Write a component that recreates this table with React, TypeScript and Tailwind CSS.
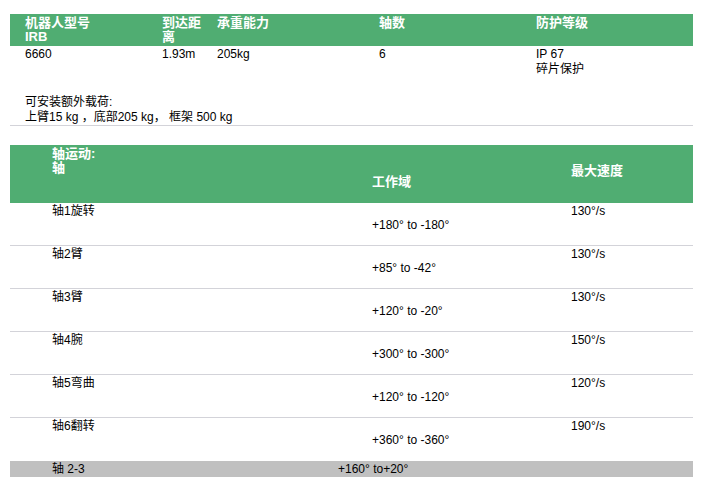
import React from "react";

const font = {
  fontFamily: '"Liberation Sans", Arial, "Noto Sans CJK SC", sans-serif',
};

const axes = [
  { name: "轴1旋转", range: "+180° to -180°", speed: "130°/s" },
  { name: "轴2臂", range: "+85° to -42°", speed: "130°/s" },
  { name: "轴3臂", range: "+120° to -20°", speed: "130°/s" },
  { name: "轴4腕", range: "+300° to -300°", speed: "150°/s" },
  { name: "轴5弯曲", range: "+120° to -120°", speed: "120°/s" },
  { name: "轴6翻转", range: "+360° to -360°", speed: "190°/s" },
];

export default function App() {
  return (
    <div
      className="w-[711px] h-[482px] bg-white text-black text-[12px] leading-[15px] pt-[14px] px-[10px]"
      style={font}
    >
      <div className="w-[683px]">
        {/* Spec table */}
        <div className="grid grid-cols-[152px_55px_162px_157px_157px] h-[32px] bg-[#50ad72] text-white font-bold text-[13px] leading-[14px] pt-[2px]">
          <div className="pl-[15px]">
            机器人型号
            <br />
            IRB
          </div>
          <div>
            到达距
            <br />离
          </div>
          <div>承重能力</div>
          <div>轴数</div>
          <div>防护等级</div>
        </div>
        <div className="grid grid-cols-[152px_55px_162px_157px_157px] pt-[1px] h-[49px]">
          <div className="pl-[15px]">6660</div>
          <div>1.93m</div>
          <div>205kg</div>
          <div>6</div>
          <div>
            IP 67
            <br />
            碎片保护
          </div>
        </div>
        <div className="pl-[15px] border-b border-[#d3d3d9]">
          <div>可安装额外载荷:</div>
          <div>上臂15 kg ，底部205 kg， 框架 500 kg</div>
        </div>

        {/* Axis movement table */}
        <div className="mt-[19px] grid grid-cols-[362px_199px_122px] h-[58px] bg-[#50ad72] text-white font-bold text-[13px] leading-[14px]">
          <div className="pl-[42px] pt-[2px]">
            轴运动:
            <br />轴
          </div>
          <div className="pt-[30px]">工作域</div>
          <div className="pt-[19px]">最大速度</div>
        </div>
        {axes.map((a, i) => (
          <div
            key={a.name}
            className={
              "grid grid-cols-[362px_199px_122px] h-[43px] pt-[1px] " +
              (i < axes.length - 1 ? "border-b border-[#d3d3d9]" : "")
            }
          >
            <div className="pl-[42px]">{a.name}</div>
            <div className="pt-[14px]">{a.range}</div>
            <div>{a.speed}</div>
          </div>
        ))}
        <div className="grid grid-cols-[328px_355px] h-[16px] bg-[#c0c0c0] leading-[16px]">
          <div className="pl-[42px]">轴 2-3</div>
          <div>+160° to+20°</div>
        </div>
      </div>
    </div>
  );
}
